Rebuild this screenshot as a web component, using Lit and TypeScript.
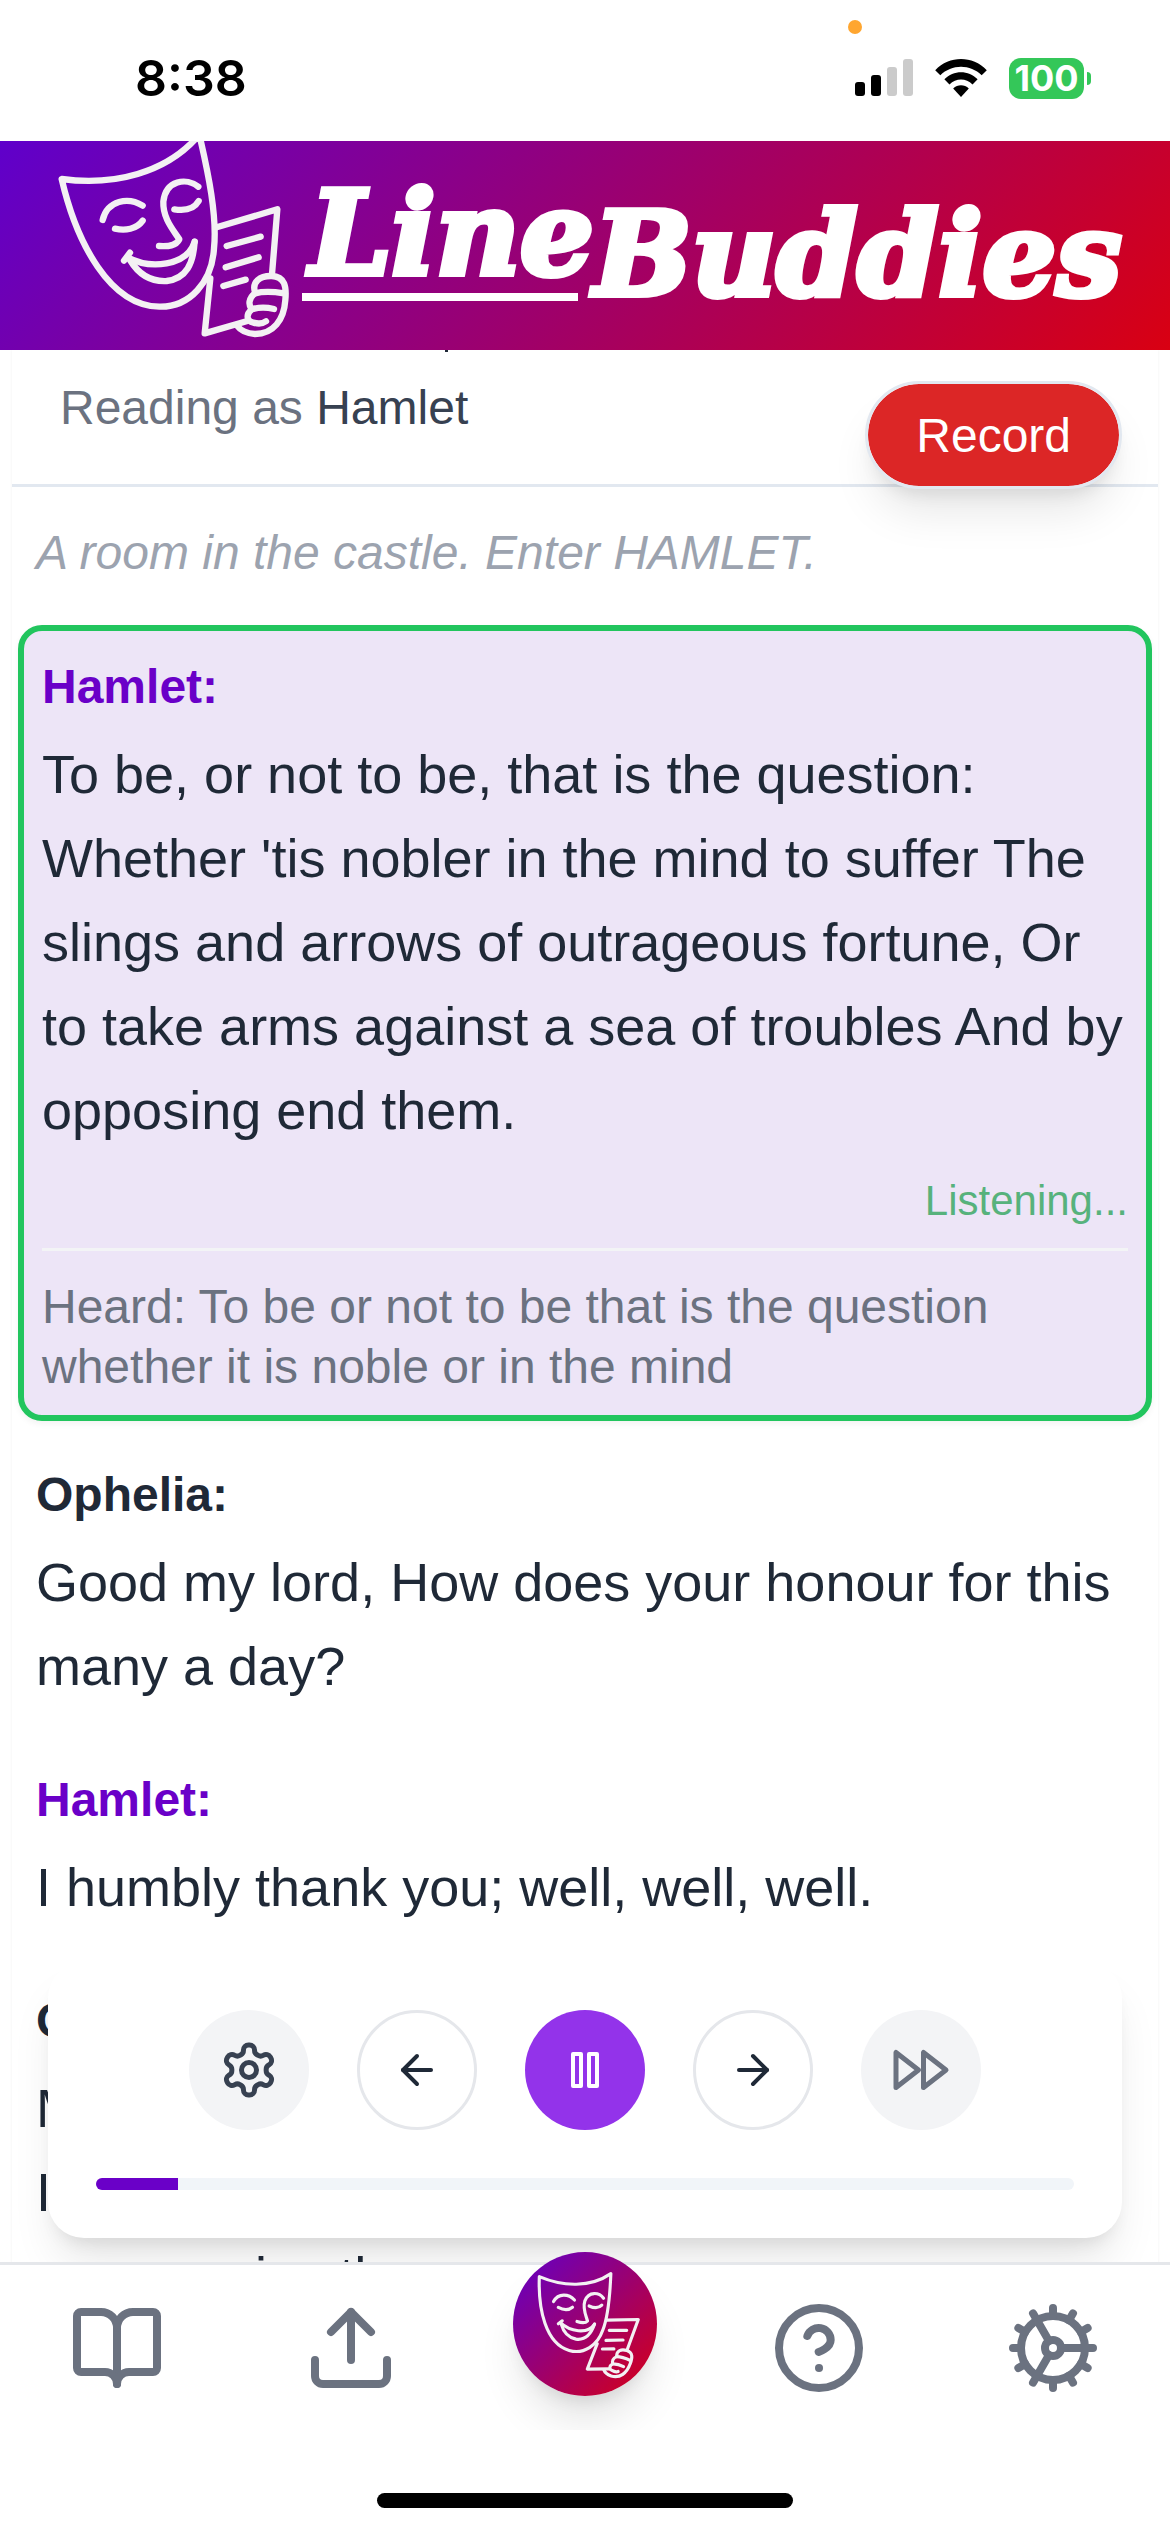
import { LitElement, html, svg, css, nothing } from "lit";
import { customElement, property, state } from "lit/decorators.js";
import { classMap } from "lit/directives/class-map.js";
import { styleMap } from "lit/directives/style-map.js";

interface Line {
  speaker: string;
  text: string;
  heard?: string;
}

const LINES: Line[] = [
  {
    speaker: "Hamlet",
    text: "To be, or not to be, that is the question: Whether 'tis nobler in the mind to suffer The slings and arrows of outrageous fortune, Or to take arms against a sea of troubles And by opposing end them.",
    heard: "To be or not to be that is the question whether it is noble or in the mind",
  },
  { speaker: "Ophelia", text: "Good my lord, How does your honour for this many a day?" },
  { speaker: "Hamlet", text: "I humbly thank you; well, well, well." },
  {
    speaker: "Ophelia",
    text: "My lord, I have remembrances of yours, That I\u00a0have longed long to re-deliver; I pray you, now receive them.",
  },
];

/* Smiling theatre mask with a hand holding a script page. */
const maskArt = svg`
  <g fill="none" stroke="#f3f1f3" stroke-width="19" stroke-linecap="round" stroke-linejoin="round">
    <path d="M65 147C220 168 380 130 478 14C505 130 532 260 522 355C516 455 450 532 358 530C210 528 110 340 65 147Z"/>
    <path d="M188 270C202 210 265 200 308 227"/>
    <path d="M225 296C255 303 290 298 308 272"/>
    <path d="M475 170C440 142 377 150 370 215C368 265 400 300 418 328C408 348 385 350 357 348"/>
    <path d="M403 238C435 243 462 238 476 213"/>
    <path d="M252 392L270 368"/>
    <path d="M262 382C330 418 440 410 464 335"/>
    <path d="M270 390C300 440 340 455 380 453C440 445 460 400 464 335"/>
    <path d="M530 292L712 238L696 433"/>
    <path d="M511 445L494 610L622 573"/>
    <path d="M560 348L662 320M557 412L656 382M550 468L617 449"/>
    <path d="M645 487C635 455 660 437 695 438C735 440 740 470 736 510C732 570 700 612 645 612C620 610 602 602 592 588"/>
    <path d="M645 490C665 485 700 485 732 490"/>
    <path d="M645 490C625 505 625 525 635 538C655 532 680 532 702 537"/>
    <path d="M635 538C615 555 622 575 640 578C655 582 670 580 678 574"/>
  </g>`;

const icons = {
  settings: svg`<path d="M12.22 2h-.44a2 2 0 0 0-2 2v.18a2 2 0 0 1-1 1.73l-.43.25a2 2 0 0 1-2 0l-.15-.08a2 2 0 0 0-2.73.73l-.22.38a2 2 0 0 0 .73 2.73l.15.1a2 2 0 0 1 1 1.72v.51a2 2 0 0 1-1 1.74l-.15.09a2 2 0 0 0-.73 2.73l.22.38a2 2 0 0 0 2.73.73l.15-.08a2 2 0 0 1 2 0l.43.25a2 2 0 0 1 1 1.73V20a2 2 0 0 0 2 2h.44a2 2 0 0 0 2-2v-.18a2 2 0 0 1 1-1.73l.43-.25a2 2 0 0 1 2 0l.15.08a2 2 0 0 0 2.73-.73l.22-.39a2 2 0 0 0-.73-2.73l-.15-.08a2 2 0 0 1-1-1.74v-.5a2 2 0 0 1 1-1.74l.15-.09a2 2 0 0 0 .73-2.73l-.22-.38a2 2 0 0 0-2.73-.73l-.15.08a2 2 0 0 1-2 0l-.43-.25a2 2 0 0 1-1-1.73V4a2 2 0 0 0-2-2z"/><circle cx="12" cy="12" r="3"/>`,
  back: svg`<path d="m12 19-7-7 7-7"/><path d="M19 12H5"/>`,
  pause: svg`<rect x="6" y="4" width="4" height="16"/><rect x="14" y="4" width="4" height="16"/>`,
  play: svg`<path d="m6 3 14 9-14 9z"/>`,
  next: svg`<path d="M5 12h14"/><path d="m12 5 7 7-7 7"/>`,
  forward: svg`<path d="m13 19 9-7-9-7z"/><path d="m2 19 9-7-9-7z"/>`,
  book: svg`<path d="M12 7v14"/><path d="M3 18a1 1 0 0 1-1-1V4a1 1 0 0 1 1-1h5a4 4 0 0 1 4 4 4 4 0 0 1 4-4h5a1 1 0 0 1 1 1v13a1 1 0 0 1-1 1h-6a3 3 0 0 0-3 3 3 3 0 0 0-3-3z"/>`,
  upload: svg`<path d="M21 15v4a2 2 0 0 1-2 2H5a2 2 0 0 1-2-2v-4"/><path d="m17 8-5-5-5 5"/><path d="M12 3v12"/>`,
  help: svg`<circle cx="12" cy="12" r="10"/><path d="M9.09 9a3 3 0 0 1 5.83 1c0 2-3 3-3 3"/><path d="M12 17h.01"/>`,
  cog: svg`<circle cx="12" cy="12" r="8"/><circle cx="12" cy="12" r="2"/><path d="M12 2v2M12 22v-2M17 20.66l-1-1.73M11 10.27 7 3.34M20.66 17l-1.73-1M3.34 7l1.73 1M14 12h8M2 12h2M20.66 7l-1.73 1M3.34 17l1.73-1M17 3.34l-1 1.73M11 13.73l-4 6.93"/>`,
};

type IconName = keyof typeof icons;

const icon = (name: IconName) => html`
  <svg class="icon" viewBox="0 0 24 24" fill="none" stroke="currentColor" stroke-width="2"
    stroke-linecap="round" stroke-linejoin="round" aria-hidden="true">${icons[name]}</svg>`;

@customElement("status-bar")
class StatusBar extends LitElement {
  static styles = css`
    :host { display: block; background: #fff; color: #000; font-family: Inter, "Liberation Sans", sans-serif; }
    .bar { position: relative; display: flex; align-items: center; justify-content: space-between; height: 141px; box-sizing: border-box; padding: 15px 79px 0 135px; }
    .time { font-size: 50px; line-height: 60px; font-weight: 600; }
    .mic { position: absolute; top: 20px; right: 308px; width: 14px; height: 14px; border-radius: 50%; background: #ffa630; }
    .status { display: flex; align-items: center; gap: 22px; }
    .signal { width: 58px; height: 38px; }
    .wifi { width: 52px; height: 38px; }
    .battery { display: flex; align-items: center; gap: 3px; }
    .level { width: 75px; height: 41px; border-radius: 12px; background: #34c759; color: #fff; font-size: 36px; line-height: 41px; font-weight: 700; text-align: center; }
    .cap { width: 4px; height: 13px; border-radius: 0 4px 4px 0; background: #34c759; }
  `;

  render() {
    return html`
      <div class="bar">
        <span class="time">8:38</span>
        <span class="mic"></span>
        <div class="status">
          <svg class="signal" viewBox="0 0 58 38" aria-hidden="true">
            <rect x="0" y="23" width="10" height="14" rx="3"/>
            <rect x="16" y="16" width="10" height="21" rx="3"/>
            <rect x="32" y="8" width="10" height="29" rx="3" fill="#cbcbcb"/>
            <rect x="48" y="0" width="10" height="37" rx="3" fill="#cbcbcb"/>
          </svg>
          <svg class="wifi" viewBox="0 0 152 112" aria-hidden="true">
            <path d="M0 33C42-11 110-11 152 33L137 48C104 14 48 14 15 48Z"/>
            <path d="M27 60C54 32 98 32 125 60L110 75C91 56 61 56 42 75Z"/>
            <path d="M53 87C66 74 86 74 99 87L76 112Z"/>
          </svg>
          <div class="battery"><span class="level">100</span><span class="cap"></span></div>
        </div>
      </div>`;
  }
}

@customElement("brand-header")
class BrandHeader extends LitElement {
  static styles = css`
    :host { display: block; }
    .header { display: flex; align-items: flex-start; height: 209px; padding-left: 40px; background: linear-gradient(135deg, #5f00cb, #d90012); overflow: hidden; }
    .mask { flex: none; width: 262px; height: 209px; }
    .wordmark { display: flex; align-items: flex-start; margin: 0; color: #fff; font: italic 700 116px/120px "DejaVu Serif", "Liberation Serif", serif; -webkit-text-stroke: 6px #fff; stroke-linejoin: round; }
    .first { padding-top: 32px; text-indent: 8px; }
    .first::after { content: ""; display: block; width: 276px; height: 8px; background: #fff; }
    .second { padding-top: 53px; }
  `;

  render() {
    return html`
      <header class="header">
        <svg class="mask" viewBox="0 33 786 627" aria-hidden="true">${maskArt}</svg>
        <h1 class="wordmark"><span class="first">Line</span><span class="second">Buddies</span></h1>
      </header>`;
  }
}

@customElement("script-line")
class ScriptLine extends LitElement {
  @property() speaker = "";
  @property() text = "";
  @property() heard?: string;
  @property({ type: Boolean }) mine = false;

  static styles = css`
    :host { display: block; }
    .line { padding: 18px; }
    .active { border: 6px solid #22c55e; border-radius: 24px; background: #ede5f7; box-shadow: 0 3px 6px rgba(0, 0, 0, 0.05); }
    .speaker { margin: 0 0 7px; font-size: 48px; line-height: 76px; font-weight: 700; color: #1f2937; }
    .mine { color: #6a00c8; }
    .text { margin: 0; font-size: 54px; line-height: 84px; color: #1f2937; }
    .listening { margin: 19px 0 0; font-size: 42px; line-height: 60px; text-align: right; color: #57b27c; }
    .heard { margin: 17px 0 0; padding-top: 26px; border-top: 3px solid #f3f4f6; font-size: 48px; line-height: 60px; color: #6b7280; }
  `;

  render() {
    return html`
      <article class=${classMap({ line: true, active: !!this.heard })}>
        <h3 class=${classMap({ speaker: true, mine: this.mine })}>${this.speaker}:</h3>
        <p class="text">${this.text}</p>
        ${this.heard
          ? html`<p class="listening" role="status">Listening...</p>
              <p class="heard">Heard: ${this.heard}</p>`
          : nothing}
      </article>`;
  }
}

@customElement("player-controls")
class PlayerControls extends LitElement {
  @property({ type: Number }) progress = 0;
  @state() private playing = true;

  static styles = css`
    :host { display: block; }
    .card { padding: 48px; border-radius: 36px; background: #fff; box-shadow: 0 30px 45px -9px rgba(0, 0, 0, 0.1), 0 12px 18px -9px rgba(0, 0, 0, 0.1); }
    .buttons { display: flex; justify-content: center; gap: 48px; }
    .button { display: grid; place-items: center; box-sizing: border-box; width: 120px; height: 120px; padding: 0; border: 0; border-radius: 50%; background: #f3f4f6; color: #374151; cursor: pointer; }
    .muted { color: #6b7280; }
    .outline { border: 3px solid #e5e7eb; background: #fff; color: #1f2937; }
    .primary { background: #9333ea; color: #fff; }
    .icon { display: block; width: 60px; height: 60px; }
    .outline .icon, .primary .icon { width: 48px; height: 48px; }
    .track { height: 12px; margin-top: 48px; border-radius: 6px; overflow: hidden; background: #f1f5f9; }
    .fill { height: 100%; background: #6a00c8; }
  `;

  render() {
    return html`
      <section class="card" aria-label="Playback">
        <div class="buttons">
          <button class="button" aria-label="Playback settings">${icon("settings")}</button>
          <button class="button outline" aria-label="Previous line">${icon("back")}</button>
          <button class="button primary" aria-label=${this.playing ? "Pause" : "Play"}
            @click=${() => (this.playing = !this.playing)}>${icon(this.playing ? "pause" : "play")}</button>
          <button class="button outline" aria-label="Next line">${icon("next")}</button>
          <button class="button muted" aria-label="Fast forward">${icon("forward")}</button>
        </div>
        <div class="track" role="progressbar" aria-label="Scene progress" aria-valuenow=${this.progress}>
          <div class="fill" style=${styleMap({ width: `${this.progress}%` })}></div>
        </div>
      </section>`;
  }
}

@customElement("tab-bar")
class TabBar extends LitElement {
  static styles = css`
    :host { display: block; }
    .nav { border-top: 3px solid #e5e7eb; background: #fff; }
    .tabs { display: grid; grid-template-columns: repeat(5, 1fr); justify-items: center; align-items: center; height: 165px; clip-path: inset(-40px 0 0 0); }
    .tab { display: grid; place-items: center; color: #6b7280; }
    .icon { display: block; width: 96px; height: 96px; }
    .home { align-self: start; width: 144px; height: 144px; margin-top: -13px; border-radius: 50%; background: linear-gradient(135deg, #5f00cb, #d90012); box-shadow: 0 30px 45px -9px rgba(0, 0, 0, 0.12), 0 12px 18px -9px rgba(0, 0, 0, 0.1); }
    .mask { display: block; width: 144px; height: 144px; }
    .indicator { width: 416px; height: 15px; margin: 63px auto 24px; border-radius: 8px; background: #000; }
  `;

  render() {
    return html`
      <nav class="nav" aria-label="Main">
        <div class="tabs">
          <a class="tab" href="#scripts" aria-label="Scripts">${icon("book")}</a>
          <a class="tab" href="#upload" aria-label="Upload">${icon("upload")}</a>
          <a class="tab home" href="#rehearse" aria-label="Rehearse">
            <svg class="mask" viewBox="39 36 432 432" aria-hidden="true">
              <g transform="translate(118 110) rotate(15.4) scale(0.495) translate(-65 -147)">${maskArt}</g>
            </svg>
          </a>
          <a class="tab" href="#help" aria-label="Help">${icon("help")}</a>
          <a class="tab" href="#settings" aria-label="Settings">${icon("cog")}</a>
        </div>
        <div class="indicator"></div>
      </nav>`;
  }
}

@customElement("app-root")
class AppRoot extends LitElement {
  @state() private recording = false;

  static styles = css`
    :host { display: flex; flex-direction: column; height: 100vh; background: #fff; font-family: "Liberation Sans", Arial, sans-serif; }
    .main { position: relative; flex: 1; min-height: 0; overflow: hidden; }
    .sheet { margin: 0 12px; background: #fff; box-shadow: 0 0 3px rgba(0, 0, 0, 0.06); }
    .reader { position: relative; padding: 22px 48px 40px; border-bottom: 3px solid #e2e8f0; }
    .reader::before { content: ""; position: absolute; top: 0; left: 433px; width: 3px; height: 2px; background: #1f2937; }
    .reading { margin: 0; font-size: 48px; line-height: 72px; color: #6b7280; }
    .role { font-weight: 500; color: #374151; }
    .record { position: absolute; top: 31px; right: 36px; z-index: 1; padding: 2px 48px 0; border: 3px solid #e2e8f0; border-radius: 54px; background: #dc2626; background-clip: padding-box; color: #fff; font: 48px/100px "Liberation Sans", Arial, sans-serif; box-shadow: 0 30px 45px -9px rgba(0, 0, 0, 0.1), 0 12px 18px -9px rgba(0, 0, 0, 0.1); cursor: pointer; }
    .script { display: flex; flex-direction: column; gap: 18px; padding: 12px 6px; }
    .direction { margin: 0; padding: 18px; font-size: 48px; line-height: 72px; font-style: italic; color: #9ca3af; }
    .player { position: absolute; right: 48px; bottom: 24px; left: 48px; z-index: 2; }
    .tabs { position: relative; z-index: 3; }
  `;

  render() {
    const role = "Hamlet";
    return html`
      <status-bar></status-bar>
      <brand-header></brand-header>
      <main class="main">
        <div class="sheet">
          <div class="reader">
            <p class="reading">Reading as <span class="role">${role}</span></p>
            <button class="record" aria-pressed=${this.recording ? "true" : "false"}
              @click=${() => (this.recording = !this.recording)}>Record</button>
          </div>
          <div class="script">
            <p class="direction">A room in the castle. Enter HAMLET.</p>
            ${LINES.map(
              (line) => html`<script-line .speaker=${line.speaker} .text=${line.text}
                .heard=${line.heard} .mine=${line.speaker === role}></script-line>`
            )}
          </div>
        </div>
        <player-controls class="player" .progress=${8.4}></player-controls>
      </main>
      <tab-bar class="tabs"></tab-bar>`;
  }
}
